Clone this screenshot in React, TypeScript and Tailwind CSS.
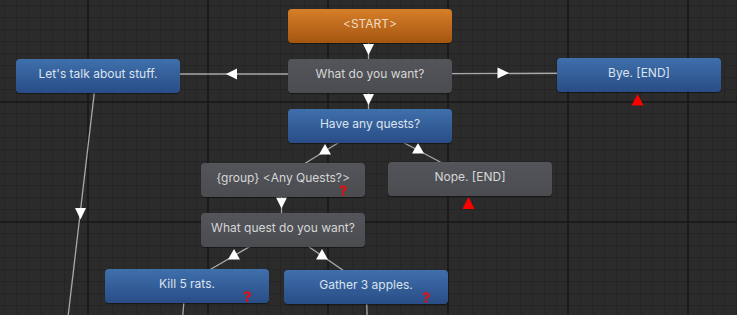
import clsx from "clsx";
import { FaQuestion } from "react-icons/fa";

type Tone = "start" | "npc" | "pc";

const tones: Record<Tone, string> = {
  start: "bg-gradient-to-b from-[#d77f2a] to-[#a4560f] text-[#f3dcc4]",
  npc: "bg-gradient-to-b from-[#53555a] to-[#4a4c50] text-[#d6d6d6]",
  pc: "bg-gradient-to-b from-[#3f70ac] to-[#294d86] text-[#dbe3ee]",
};

type NodeDef = { label: string; pos: string; tone: Tone; quest?: boolean };

const nodes: NodeDef[] = [
  { label: "<START>", pos: "left-[288px] top-[9px]", tone: "start" },
  { label: "What do you want?", pos: "left-[288px] top-[59px]", tone: "npc" },
  { label: "Let's talk about stuff.", pos: "left-[16px] top-[59px]", tone: "pc" },
  { label: "Bye. [END]", pos: "left-[557px] top-[58px]", tone: "pc" },
  { label: "Have any quests?", pos: "left-[288px] top-[109px]", tone: "pc" },
  { label: "{group} <Any Quests?>", pos: "left-[201px] top-[163px]", tone: "npc", quest: true },
  { label: "Nope. [END]", pos: "left-[388px] top-[162px]", tone: "npc" },
  { label: "What quest do you want?", pos: "left-[201px] top-[213px]", tone: "npc" },
  { label: "Kill 5 rats.", pos: "left-[105px] top-[269px]", tone: "pc", quest: true },
  { label: "Gather 3 apples.", pos: "left-[284px] top-[270px]", tone: "pc", quest: true },
];

// links run centre to centre, nodes are drawn over them
const links = [
  [368.5, 24, 368.5, 74],
  [368.5, 74, 368.5, 124],
  [368.5, 74, 96.5, 74],
  [368.5, 74, 637.5, 73],
  [368.5, 124, 281.5, 178],
  [368.5, 124, 468.5, 177],
  [281.5, 178, 281.5, 228],
  [281.5, 228, 185.5, 284],
  [281.5, 228, 364.5, 285],
  [96.5, 74, 66.5, 330],
  [185.5, 284, 181.5, 330],
  [366, 285, 367.7, 330],
];

const arrows = [
  "363,44 374,44 368.5,55",
  "363,94 374,94 368.5,105",
  "237,68.5 237,79.5 226,74",
  "497.5,67.5 497.5,78.5 509,73",
  "319,154.5 331,154.5 325,144",
  "412,153.5 424,153.5 418,143",
  "276,197.5 287,197.5 281.5,208.5",
  "228,259.5 240,259.5 234,249",
  "316,259.5 328,259.5 322,249",
  "75,208 86,208 80.5,219.5",
];

const ends = ["631.5,105.5 643.5,105.5 637.5,94", "462.5,209 474.5,209 468.5,197"];

function Canvas() {
  const minorX = Array.from({ length: 62 }, (_, i) => 4 + i * 12);
  const minorY = Array.from({ length: 27 }, (_, i) => 5 + i * 12);
  return (
    <svg className="absolute inset-0" width={737} height={315}>
      <rect width={737} height={315} fill="#2b2b2b" />
      {minorX.map((x) => (
        <rect key={"x" + x} x={x} y={0} width={1} height={315} fill="#252525" />
      ))}
      {minorY.map((y) => (
        <rect key={"y" + y} x={0} y={y} width={737} height={1} fill="#252525" />
      ))}
      {[87, 207, 327, 447, 567, 687].map((x) => (
        <rect key={"X" + x} x={x} y={0} width={2} height={315} fill="#1b1b1b" />
      ))}
      {[101, 221].map((y) => (
        <rect key={"Y" + y} x={0} y={y} width={737} height={2} fill="#1b1b1b" />
      ))}
      {links.map(([x1, y1, x2, y2], i) => (
        <line key={i} x1={x1} y1={y1} x2={x2} y2={y2} stroke="#a9a9a9" strokeWidth={1.3} />
      ))}
      {arrows.map((p) => (
        <polygon key={p} points={p} fill="#ffffff" />
      ))}
      {ends.map((p) => (
        <polygon key={p} points={p} fill="#ff0000" />
      ))}
    </svg>
  );
}

function Node({ label, pos, tone, quest }: NodeDef) {
  return (
    <div
      className={clsx(
        "absolute w-[164px] h-[34px] rounded-[4px] flex items-center justify-center pb-[4px] text-[12px] leading-[12px] shadow-[0_1px_1px_rgba(0,0,0,0.45)]",
        pos,
        tones[tone]
      )}
    >
      {label}
      {quest && <FaQuestion className="absolute left-[138px] top-[22px] w-[8px] h-[11px] text-[#e01010]" />}
    </div>
  );
}

export default function App() {
  return (
    <div className="relative w-[737px] h-[315px] overflow-hidden bg-[#2b2b2b] font-['Inter',sans-serif]">
      <Canvas />
      {nodes.map((n) => (
        <Node key={n.label} {...n} />
      ))}
    </div>
  );
}
